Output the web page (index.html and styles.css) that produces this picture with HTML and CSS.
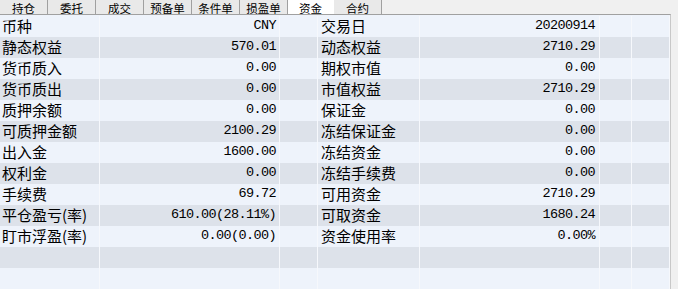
FILE: index.html
```html
<!DOCTYPE html>
<html>
<head>
  <title>资金</title>
  <link rel="stylesheet" href="styles.css">
</head>
<body>
  <div class="tabs">
    <div class="tab">持仓</div>
    <div class="tab">委托</div>
    <div class="tab">成交</div>
    <div class="tab">预备单</div>
    <div class="tab">条件单</div>
    <div class="tab">损盈单</div>
    <div class="tab tab-active">资金</div>
    <div class="tab">合约</div>
  </div>

  <div class="grid">
    <div class="row">
      <div class="cell label">币种</div><div class="cell num">CNY</div><div class="cell gap"></div>
      <div class="cell label label-r">交易日</div><div class="cell num num-r">20200914</div><div class="cell c6"></div><div class="cell c7"></div>
    </div>
    <div class="row">
      <div class="cell label">静态权益</div><div class="cell num">570.01</div><div class="cell gap"></div>
      <div class="cell label label-r">动态权益</div><div class="cell num num-r">2710.29</div><div class="cell c6"></div><div class="cell c7"></div>
    </div>
    <div class="row">
      <div class="cell label">货币质入</div><div class="cell num">0.00</div><div class="cell gap"></div>
      <div class="cell label label-r">期权市值</div><div class="cell num num-r">0.00</div><div class="cell c6"></div><div class="cell c7"></div>
    </div>
    <div class="row">
      <div class="cell label">货币质出</div><div class="cell num">0.00</div><div class="cell gap"></div>
      <div class="cell label label-r">市值权益</div><div class="cell num num-r">2710.29</div><div class="cell c6"></div><div class="cell c7"></div>
    </div>
    <div class="row">
      <div class="cell label">质押余额</div><div class="cell num">0.00</div><div class="cell gap"></div>
      <div class="cell label label-r">保证金</div><div class="cell num num-r">0.00</div><div class="cell c6"></div><div class="cell c7"></div>
    </div>
    <div class="row">
      <div class="cell label">可质押金额</div><div class="cell num">2100.29</div><div class="cell gap"></div>
      <div class="cell label label-r">冻结保证金</div><div class="cell num num-r">0.00</div><div class="cell c6"></div><div class="cell c7"></div>
    </div>
    <div class="row">
      <div class="cell label">出入金</div><div class="cell num">1600.00</div><div class="cell gap"></div>
      <div class="cell label label-r">冻结资金</div><div class="cell num num-r">0.00</div><div class="cell c6"></div><div class="cell c7"></div>
    </div>
    <div class="row">
      <div class="cell label">权利金</div><div class="cell num">0.00</div><div class="cell gap"></div>
      <div class="cell label label-r">冻结手续费</div><div class="cell num num-r">0.00</div><div class="cell c6"></div><div class="cell c7"></div>
    </div>
    <div class="row">
      <div class="cell label">手续费</div><div class="cell num">69.72</div><div class="cell gap"></div>
      <div class="cell label label-r">可用资金</div><div class="cell num num-r">2710.29</div><div class="cell c6"></div><div class="cell c7"></div>
    </div>
    <div class="row">
      <div class="cell label">平仓盈亏(率)</div><div class="cell num">610.00(28.11%)</div><div class="cell gap"></div>
      <div class="cell label label-r">可取资金</div><div class="cell num num-r">1680.24</div><div class="cell c6"></div><div class="cell c7"></div>
    </div>
    <div class="row">
      <div class="cell label">盯市浮盈(率)</div><div class="cell num">0.00(0.00)</div><div class="cell gap"></div>
      <div class="cell label label-r">资金使用率</div><div class="cell num num-r">0.00%</div><div class="cell c6"></div><div class="cell c7"></div>
    </div>
    <div class="row">
      <div class="cell label"></div><div class="cell num"></div><div class="cell gap"></div>
      <div class="cell label label-r"></div><div class="cell num num-r"></div><div class="cell c6"></div><div class="cell c7"></div>
    </div>
    <div class="row">
      <div class="cell label"></div><div class="cell num"></div><div class="cell gap"></div>
      <div class="cell label label-r"></div><div class="cell num num-r"></div><div class="cell c6"></div><div class="cell c7"></div>
    </div>
  </div>
</body>
</html>
```

FILE: styles.css
```css
body {
  margin: 0;
  background-color: #f0f0f0;
  font-family: "Noto Sans CJK SC", "DejaVu Sans", sans-serif;
  overflow: hidden;
}

/* tab strip */
.tabs {
  display: flex;
  height: 14px;
  background-color: #f0f0f0;
}

.tab {
  width: 47px;
  height: 14px;
  border-right: 1px solid #a0a0a0;
  background-color: #e9e9e9;
  font-size: 11.5px;
  line-height: 16px;
  text-align: center;
  color: #000;
}

.tab-active {
  width: 45px;
  background-color: #fff;
  border-right: 1px solid #fff;
}

/* data grid */
.grid {
  width: 670px;
  border-top: 1px solid #a0a0a0;
  border-right: 1px solid #c8c8c8;
  padding-top: 1px;
  background-color: #eef3fb;
}

.row {
  display: grid;
  grid-template-columns: 100px 180px 38px 102px 180px 32px 38px;
  height: 21px;
  background-color: #eef3fb;
}

.row:nth-child(even) {
  background-color: #dde2ea;
}

.cell {
  border-right: 1px solid #f6f8fc;
  font-size: 15px;
  line-height: 19px;
  white-space: nowrap;
  overflow: hidden;
  color: #000;
}

.label {
  padding-left: 2px;
}

.label-r {
  padding-left: 3px;
}

.num {
  text-align: right;
  padding-right: 3px;
  font-family: "Liberation Mono", "DejaVu Sans Mono", monospace;
  font-size: 13.5px;
  letter-spacing: -0.6px;
  line-height: 20px;
}

.num-r {
  padding-right: 4px;
}
```
